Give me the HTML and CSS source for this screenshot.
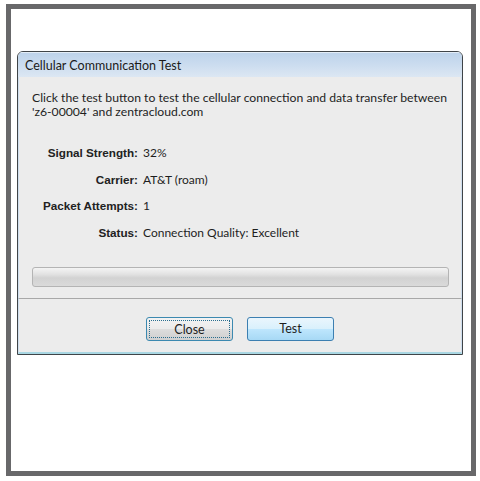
FILE: index.html
```html
<!DOCTYPE html>
<html lang="en">
<head>
    <meta charset="UTF-8">
    <meta name="viewport" content="width=device-width, initial-scale=1.0">
    <title>Cellular Communication Test</title>
    <link rel="stylesheet" href="styles.css">
</head>
<body>
    <div class="frame">
        <div class="dialog">
            <div class="titlebar">Cellular Communication Test</div>

            <div class="main">
                <p class="intro">Click the test button to test the cellular connection and data transfer between 'z6-00004' and zentracloud.com</p>

                <div class="info">
                    <span class="label">Signal Strength:</span>
                    <span class="value">32%</span>
                    <span class="label">Carrier:</span>
                    <span class="value">AT&amp;T (roam)</span>
                    <span class="label">Packet Attempts:</span>
                    <span class="value">1</span>
                    <span class="label">Status:</span>
                    <span class="value">Connection Quality: Excellent</span>
                </div>

                <div class="progress"></div>
            </div>

            <div class="footer">
                <button class="btn btn-focus"><span>Close</span></button>
                <button class="btn btn-default"><span>Test</span></button>
            </div>
        </div>
    </div>
</body>
</html>
```

FILE: styles.css
```css
body {
    margin: 0;
    background-color: #fff;
    font-family: Lato, 'Noto Sans', sans-serif;
    color: #1e1e1e;
}

.frame {
    box-sizing: border-box;
    width: 470px;
    height: 472px;
    margin: 4px 0 0 6px;
    padding: 42px 0 0 6px;
    border: 5px solid #68686a;
    background-color: #fff;
}

.dialog {
    box-sizing: border-box;
    width: 446px;
    height: 304px;
    border: 1px solid #3f4448;
    border-radius: 6px 6px 0 0;
    background-color: #ececec;
    overflow: hidden;
    display: flex;
    flex-direction: column;
}

.titlebar {
    height: 25px;
    line-height: 27px;
    padding-left: 7px;
    font-size: 12.5px;
    color: #1a1a1a;
    background: linear-gradient(to bottom, #bcd2ea 0%, #cbdcef 50%, #dce7f3 100%);
    box-shadow: inset 0 1px 0 #e3edf7;
}

.main {
    height: 221px;
    box-sizing: border-box;
    padding: 14px 13px 11px 13px;
    border-left: 1px solid #cfdeee;
    border-right: 1px solid #cfdeee;
    display: flex;
    flex-direction: column;
}

.intro {
    margin: 0;
    font-size: 12.2px;
    line-height: 14px;
}

.info {
    display: grid;
    grid-template-columns: 106px auto;
    column-gap: 5px;
    row-gap: 12.5px;
    margin-top: 27px;
    font-size: 12px;
    line-height: 14px;
}

.label {
    text-align: right;
    font-family: 'Liberation Sans', Arial, sans-serif;
    font-weight: bold;
    font-size: 11.7px;
    color: #222;
}

.progress {
    box-sizing: border-box;
    width: 417px;
    height: 20px;
    margin-top: 27px;
    border: 1px solid #b4b4b4;
    border-radius: 3px;
    background: linear-gradient(to bottom, #f4f4f4 0%, #e2e2e2 35%, #d2d2d2 55%, #dadada 100%);
}

.footer {
    height: 53px;
    box-sizing: border-box;
    border-top: 1px solid #a8a8a8;
    border-left: 1px solid #cfdeee;
    border-right: 1px solid #cfdeee;
    border-bottom: 2px solid #a9d7e3;
    flex: 1;
    display: flex;
    justify-content: center;
    align-items: flex-start;
    gap: 14px;
    padding-top: 18px;
}

.btn {
    box-sizing: border-box;
    width: 87px;
    height: 24px;
    padding: 2px;
    border-radius: 3px;
    font-family: Lato, 'Noto Sans', sans-serif;
    font-size: 12.5px;
    color: #1e1e1e;
    cursor: pointer;
}

.btn span {
    display: block;
    height: 100%;
    line-height: 18px;
}

.btn-focus {
    border: 1px solid #3c89b0;
    background: linear-gradient(to bottom, #f3f3f3 0%, #ebebeb 50%, #dddddd 51%, #cfcfcf 100%);
}

.btn-focus span {
    box-sizing: border-box;
    border: 1px dotted #2a6e8f;
}

.btn-default {
    border: 1px solid #3c7fb1;
    background: linear-gradient(to bottom, #eaf6fd 0%, #d9f0fc 50%, #bee6fd 51%, #a7d9f5 100%);
}
```
